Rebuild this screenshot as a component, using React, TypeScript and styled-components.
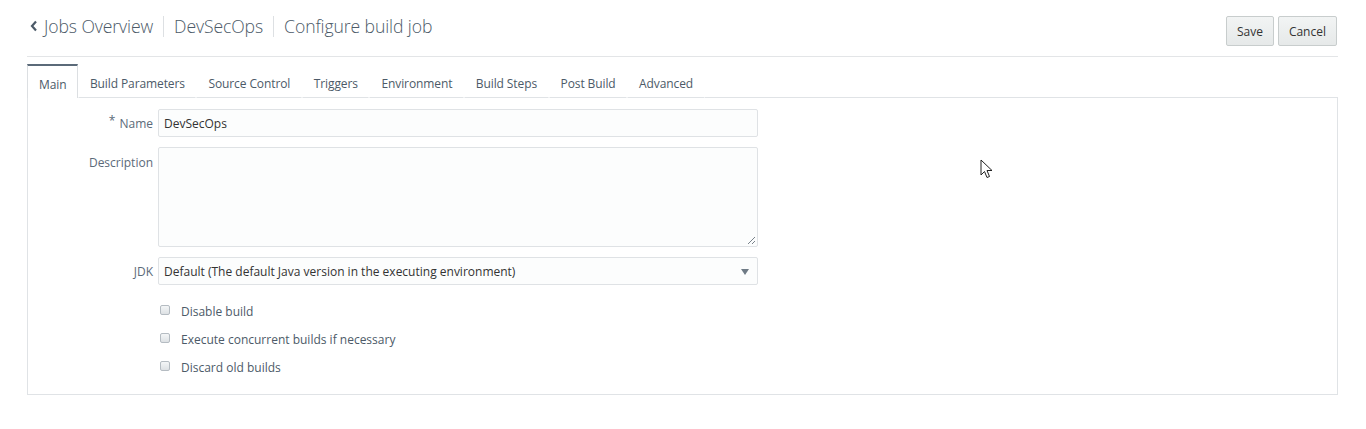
import React from "react";
import styled, { createGlobalStyle } from "styled-components";

const Global = createGlobalStyle`
  html, body { margin: 0; padding: 0; background: #ffffff; }
  body { font-family: "Open Sans", "Noto Sans", sans-serif; color: #333; }
  * { box-sizing: border-box; }
`;

const Page = styled.div`
  width: 1366px;
  height: 429px;
  padding: 0 28px 0 27px;
  position: relative;
`;

const Header = styled.div`
  display: flex;
  align-items: center;
  justify-content: space-between;
  height: 57px;
  border-bottom: 1px solid #e3e5e7;
`;

const Crumbs = styled.div`
  display: flex;
  align-items: center;
  padding-left: 3px;
  padding-bottom: 4px;
`;

const Crumb = styled.span<{ $first?: boolean }>`
  font-size: 17.6px;
  font-weight: 300;
  color: #4c5a68;
  letter-spacing: -0.1px;
  padding: 0 10px;
  border-left: ${(p) => (p.$first ? "none" : "1px solid #dde0e3")};
  line-height: 21px;
  display: flex;
  align-items: center;
  gap: 6px;
  ${(p) => (p.$first ? "padding-left: 0;" : "")}
`;

const Buttons = styled.div`
  display: flex;
  gap: 4px;
  padding-top: 6px;
  margin-right: 1px;
`;

const Button = styled.button`
  height: 30px;
  padding: 0 10px;
  font-family: inherit;
  font-size: 12px;
  color: #333;
  background: linear-gradient(#f2f4f4, #e6e9e9);
  border: 1px solid #c8cdcd;
  border-radius: 2px;
`;

const Tabs = styled.div`
  display: flex;
  margin-top: 7px;
  border-bottom: 1px solid #e0e3e6;
  height: 34px;
`;

const Tab = styled.div<{ $active?: boolean }>`
  font-size: 12px;
  letter-spacing: -0.1px;
  color: #4c5a68;
  padding: 4px 10.5px 0 11px;
  display: flex;
  align-items: center;
  margin-bottom: -1px;
  height: 34px;
  border-top: 2px solid ${(p) => (p.$active ? "#5b6a79" : "transparent")};
  border-left: 1px solid ${(p) => (p.$active ? "#dcdfe2" : "transparent")};
  border-right: 1px solid ${(p) => (p.$active ? "#dcdfe2" : "transparent")};
  background: #fff;
  ${(p) => (p.$active ? "" : "border-bottom: 1px solid #e0e3e6;")}
`;

const Panel = styled.div`
  border: 1px solid #e0e3e6;
  border-top: none;
  height: 297px;
  padding-top: 11px;
`;

const Row = styled.div<{ $top?: boolean }>`
  display: flex;
  align-items: ${(p) => (p.$top ? "flex-start" : "center")};
  margin-bottom: 10px;
`;

const Label = styled.label<{ $pt?: number }>`
  width: 130px;
  text-align: right;
  padding-right: 5px;
  font-size: 12px;
  color: #5b6a79;
  padding-top: ${(p) => p.$pt ?? 0}px;
`;

const Star = styled.span`
  font-size: 12px;
  margin-right: 4px;
  position: relative;
  top: -3px;
`;

const Input = styled.div`
  width: 600px;
  height: 28px;
  border: 1px solid #dfe2e5;
  border-radius: 2px;
  background: #fcfdfd;
  font-size: 12px;
  color: #333;
  display: flex;
  align-items: center;
  padding-left: 5px;
  position: relative;
`;

const TextArea = styled(Input)`
  height: 100px;
`;

const Grip = styled.svg`
  position: absolute;
  right: 1px;
  bottom: 1px;
`;

const Arrow = styled.span`
  position: absolute;
  right: 8px;
  top: 11px;
  width: 0;
  height: 0;
  border-left: 4px solid transparent;
  border-right: 4px solid transparent;
  border-top: 6px solid #6f7b86;
`;

const Checks = styled.div`
  display: flex;
  flex-direction: column;
  gap: 11px;
  padding-left: 132px;
  padding-top: 8px;
`;

const Check = styled.div`
  display: flex;
  align-items: center;
  gap: 11px;
  font-size: 12px;
  color: #4c5a68;
  height: 17px;
`;

const Box = styled.span`
  width: 10px;
  height: 10px;
  border: 1px solid #b5bcc2;
  border-radius: 2px;
  background: linear-gradient(#f4f6f7, #dde1e4);
  margin-top: -3px;
`;

const Cursor = styled.svg`
  position: absolute;
  left: 980px;
  top: 159px;
`;

const tabs = [
  "Main",
  "Build Parameters",
  "Source Control",
  "Triggers",
  "Environment",
  "Build Steps",
  "Post Build",
  "Advanced",
];

export default function App() {
  return (
    <Page>
      <Global />
      <Header>
        <Crumbs>
          <Crumb $first>
            <svg width="8" height="12" viewBox="0 0 8 12">
              <path d="M6 1.5 L2 6 L6 10.5" stroke="#4c5a68" strokeWidth="2.2" fill="none" />
            </svg>
            Jobs Overview
          </Crumb>
          <Crumb>DevSecOps</Crumb>
          <Crumb>Configure build job</Crumb>
        </Crumbs>
        <Buttons>
          <Button>Save</Button>
          <Button>Cancel</Button>
        </Buttons>
      </Header>
      <Tabs>
        {tabs.map((t, i) => (
          <Tab key={t} $active={i === 0}>
            {t}
          </Tab>
        ))}
      </Tabs>
      <Panel>
        <Row>
          <Label>
            <Star>*</Star>Name
          </Label>
          <Input>DevSecOps</Input>
        </Row>
        <Row $top>
          <Label $pt={7}>Description</Label>
          <TextArea>
            <Grip width="9" height="9" viewBox="0 0 9 9">
              <path d="M8 1 L1 8 M8 5 L5 8" stroke="#7a838b" strokeWidth="1" />
            </Grip>
          </TextArea>
        </Row>
        <Row>
          <Label>JDK</Label>
          <Input>
            Default (The default Java version in the executing environment)
            <Arrow />
          </Input>
        </Row>
        <Checks>
          <Check>
            <Box />
            Disable build
          </Check>
          <Check>
            <Box />
            Execute concurrent builds if necessary
          </Check>
          <Check>
            <Box />
            Discard old builds
          </Check>
        </Checks>
      </Panel>
      <Cursor width="14" height="22" viewBox="0 0 14 22">
        <path
          d="M1 1 L1 16 L4.5 12.5 L7 18.5 L9.5 17.5 L7 11.5 L12 11.5 Z"
          fill="#fff"
          stroke="#222"
          strokeWidth="1"
        />
      </Cursor>
    </Page>
  );
}
